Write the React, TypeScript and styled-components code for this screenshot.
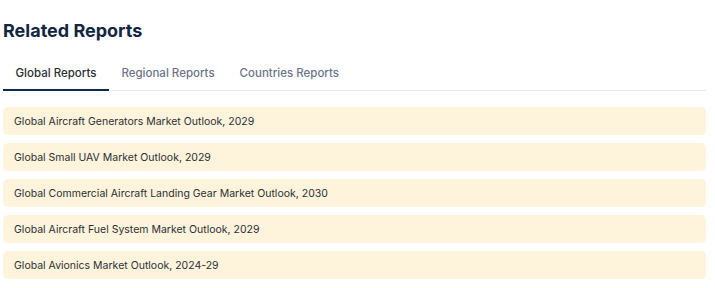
import React, { useState } from "react";
import styled, { createGlobalStyle } from "styled-components";

const GlobalStyle = createGlobalStyle`
  body {
    margin: 0;
    font-family: Inter, "Noto Sans", sans-serif;
    background: #ffffff;
  }
`;

const tabs = ["Global Reports", "Regional Reports", "Countries Reports"];

const reports = [
  "Global Aircraft Generators Market Outlook, 2029",
  "Global Small UAV Market Outlook, 2029",
  "Global Commercial Aircraft Landing Gear Market Outlook, 2030",
  "Global Aircraft Fuel System Market Outlook, 2029",
  "Global Avionics Market Outlook, 2024-29",
];

export default function App() {
  const [active, setActive] = useState(0);
  return (
    <>
      <GlobalStyle />
      <Section>
        <Title>Related Reports</Title>
        <TabBar>
          {tabs.map((t, i) => (
            <Tab key={t} $active={i === active} onClick={() => setActive(i)}>
              {t}
            </Tab>
          ))}
        </TabBar>
        <List>
          {reports.map((r) => (
            <Item key={r}>{r}</Item>
          ))}
        </List>
      </Section>
    </>
  );
}

const Section = styled.section`
  width: 703px;
  padding: 18px 0 0 3px;
`;

const Title = styled.h2`
  margin: 0;
  font-size: 18px;
  line-height: 26px;
  font-weight: 700;
  color: #112640;
`;

const TabBar = styled.div`
  display: flex;
  margin-top: 16px;
  border-bottom: 1px solid #e5e7eb;
`;

const Tab = styled.button<{ $active: boolean }>`
  background: none;
  border: none;
  padding: 6px 12.5px 9px;
  line-height: 14px;
  margin-bottom: -1px;
  font-family: Inter, "Noto Sans", sans-serif;
  font-size: 11.5px;
  font-weight: 500;
  cursor: pointer;
  color: ${(p) => (p.$active ? "#2b2f36" : "#6b7489")};
  border-bottom: 2px solid ${(p) => (p.$active ? "#0d2a4f" : "transparent")};
`;

const List = styled.div`
  display: flex;
  flex-direction: column;
  gap: 8px;
  margin-top: 16px;
`;

const Item = styled.div`
  background: #fef4dc;
  border-radius: 5px;
  height: 28px;
  display: flex;
  align-items: center;
  padding: 0 11px;
  font-size: 10.5px;
  color: #2b2f36;
`;
